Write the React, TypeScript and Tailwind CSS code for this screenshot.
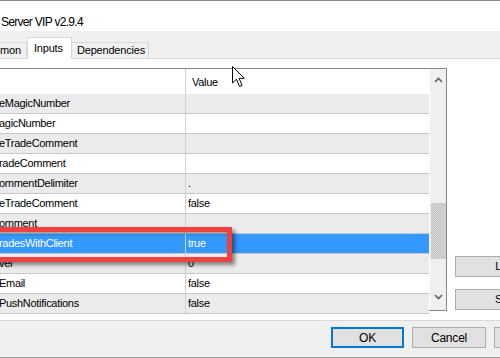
import React from "react";

type Row = { name: string; value: string; selected?: boolean };

const rows: Row[] = [
  { name: "eMagicNumber", value: "" },
  { name: "agicNumber", value: "" },
  { name: "eTradeComment", value: "" },
  { name: "radeComment", value: "" },
  { name: "ommentDelimiter", value: "." },
  { name: "eTradeComment", value: "false" },
  { name: "omment", value: "" },
  { name: "radesWithClient", value: "true", selected: true },
  { name: "vel", value: "0" },
  { name: "Email", value: "false" },
  { name: "PushNotifications", value: "false" },
];

const font = "font-['Liberation_Sans',Arial,sans-serif]";

const Cursor = () => (
  <svg width="14" height="22" viewBox="0 0 14 22" className="absolute left-[232px] top-[66px]">
    <path
      d="M0.5 0.5 L0.5 17 L4.5 13.2 L7.5 20.5 L10 19.4 L7.1 12.3 L12.3 12.3 Z"
      fill="#ffffff"
      stroke="#000000"
      strokeWidth="1"
      strokeLinejoin="miter"
    />
  </svg>
);

const App = () => {
  return (
    <div className={`relative w-[500px] h-[358px] overflow-hidden bg-white text-black ${font}`}>
      {/* title bar */}
      <div className="h-[31px] border-t border-[#8a8a8a] pt-[8px] pl-[1px]">
        <span className="inline-block text-[12px] leading-[14px] tracking-[-0.7px] whitespace-nowrap">Server VIP v2.9.4</span>
      </div>

      {/* tabs */}
      <div className="h-[27px] bg-[#f0f0f0] flex items-end text-[11px] tracking-[-0.2px]">
        <div className="shrink-0 ml-[-20px] w-[47px] h-[16px] border border-b-0 border-[#d9d9d9] flex items-center pl-[19px]">
          mon
        </div>
        <div className="shrink-0 relative z-10 mb-[-1px] w-[45px] h-[22px] bg-white border border-b-0 border-[#d9d9d9] flex items-start pt-[2px] pl-[6px]">
          Inputs
        </div>
        <div className="shrink-0 w-[77px] h-[16px] border border-b-0 border-l-0 border-[#d9d9d9] flex items-center pl-[5px]">
          Dependencies
        </div>
      </div>

      {/* tab page */}
      <div className="h-[263px] border-t border-b border-[#d9d9d9] bg-white flex items-start">
        <div className="shrink-0 mt-[9px] ml-[-20px] w-[467px] h-[243px] border border-[#828790] flex text-[11px] tracking-[-0.3px]">
          <div className="w-[448px] flex flex-col">
            <div className="h-[25px] flex shrink-0">
              <div className="w-[205px] border-r border-[#d3d3d3]" />
              <div className="flex-1 flex items-center pl-[6px] pt-[1px]">Value</div>
            </div>
            {rows.map((r, i) => (
              <div
                key={i}
                className={`h-[20px] shrink-0 flex border-b border-[#c8c8c8] ${
                  r.selected ? "bg-[#3399ff] text-white" : i % 2 === 0 ? "bg-[#ebebeb]" : "bg-white"
                }`}
              >
                <div className="w-[205px] border-r border-[#d3d3d3] flex items-center pl-[18px] whitespace-nowrap">
                  {r.name}
                </div>
                <div className="flex-1 flex items-center pl-[2px]">{r.value}</div>
              </div>
            ))}
          </div>
          {/* scrollbar */}
          <div className="w-[17px] border-l border-white bg-[#f0f0f0] flex flex-col items-center">
            <svg width="9" height="6" viewBox="0 0 9 6" className="mt-[8px]">
              <path d="M1 5 L4.5 1.5 L8 5" fill="none" stroke="#606060" strokeWidth="1.6" />
            </svg>
            <div className="mt-[120px] w-[15px] h-[56px] bg-[image:repeating-conic-gradient(#c2c2c2_0_25%,#d9d9d9_0_50%)] bg-[length:2px_2px]" />
            <svg width="9" height="6" viewBox="0 0 9 6" className="mt-[35px]">
              <path d="M1 1 L4.5 4.5 L8 1" fill="none" stroke="#606060" strokeWidth="1.6" />
            </svg>
          </div>
        </div>

        <div className="shrink-0 ml-[8px] pt-[197px] flex flex-col gap-[12px] text-[11px]">
          <div className="w-[105px] h-[21px] bg-[#e1e1e1] border border-[#adadad] flex items-center justify-center">
            Load
          </div>
          <div className="w-[105px] h-[21px] bg-[#e1e1e1] border border-[#adadad] flex items-center justify-center">
            Save
          </div>
        </div>
      </div>

      {/* bottom buttons */}
      <div className="h-[37px] bg-[#f0f0f0] border-b border-[#a0a0a0] flex items-start pt-[6px] pl-[331px] gap-[8px] text-[12px] tracking-[-0.2px]">
        <div className="shrink-0 w-[73px] h-[21px] bg-[#e1e1e1] border-2 border-[#0078d7] flex items-center justify-center">
          OK
        </div>
        <div className="shrink-0 w-[74px] h-[21px] bg-[#e1e1e1] border border-[#adadad] flex items-center justify-center">
          Cancel
        </div>
        <div className="shrink-0 w-[74px] h-[21px] bg-[#e1e1e1] border border-[#adadad]" />
      </div>

      {/* annotation */}
      <div className="absolute left-[-10px] top-[227px] w-[242px] h-[35px] border-[5px] border-[#f04040] shadow-[3px_3px_4px_rgba(0,0,0,0.45),inset_2px_2px_3px_rgba(0,0,0,0.35)]" />

      <Cursor />
    </div>
  );
};

export default App;
